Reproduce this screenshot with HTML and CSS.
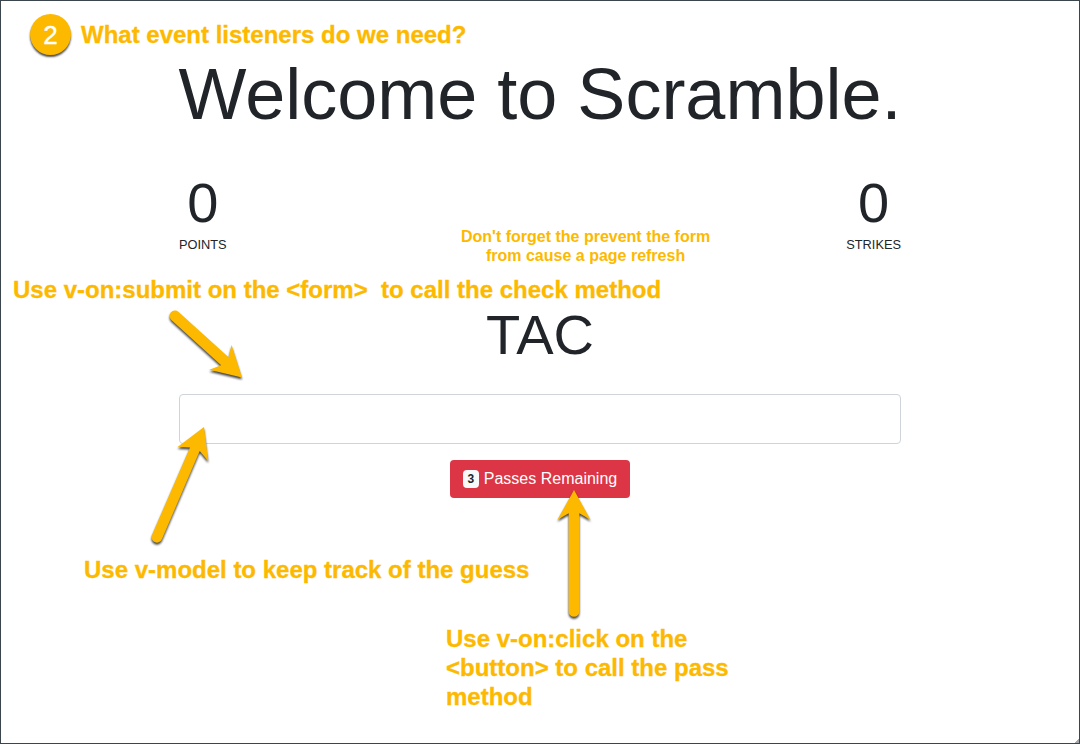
FILE: index.html
```html
<!DOCTYPE html>
<html lang="en">
<head>
<meta charset="utf-8">
<title>Scramble</title>
<link rel="stylesheet" href="styles.css">
</head>
<body>
<main class="game">
  <h1 class="title">Welcome to Scramble.</h1>
  <section class="scores">
    <div class="score"><span class="score-value">0</span><span class="score-label">POINTS</span></div>
    <div class="score"><span class="score-value">0</span><span class="score-label">STRIKES</span></div>
  </section>
  <div class="word">TAC</div>
  <form class="guess"><input class="guess-input" type="text" aria-label="Guess"></form>
  <button class="pass" type="button"><span class="badge">3</span><span>Passes Remaining</span></button>
</main>

<div class="step">2</div>
<p class="note note-question">What event listeners do we need?</p>
<p class="note note-prevent">Don't forget the prevent the form<br>from cause a page refresh</p>
<p class="note note-submit">Use v-on:submit on the &lt;form&gt;&nbsp; to call the check method</p>
<p class="note note-model">Use v-model to keep track of the guess</p>
<p class="note note-click">Use v-on:click on the<br>&lt;button&gt; to call the pass<br>method</p>
<svg class="arrows" width="1080" height="744" viewBox="0 0 1080 744" aria-hidden="true">
  <path d="M178.6 312 L228.6 357.2 L231.6 345 L242 377.5 L209.3 369.8 L221.2 365.3 L171.3 320 A5.3 5.3 0 0 1 178.6 312Z"/>
  <path d="M151.8 535.5 L190 447.6 L177.6 447 L204 427 L208.2 461 L199.7 451 L162 539 A5.3 5.3 0 0 1 151.8 535.5Z"/>
  <path d="M568.7 611.5 L568.7 513.2 L557.5 519.8 L574 490 L590.5 519.8 L579.3 513.2 L579.3 611.5 A5.3 5.3 0 0 1 568.7 611.5Z"/>
</svg>
<div class="resize-corner"></div>
</body>
</html>
```
FILE: styles.css
```css
* { box-sizing: border-box; }

body {
  margin: 0;
  height: 744px;
  overflow: hidden;
  position: relative;
  border: 1px solid #3b454d;
  background: #fff;
  color: #212529;
  font-family: "Liberation Sans", Arial, sans-serif;
}

.game {
  width: 722px;
  margin: 0 auto;
  padding-top: 50px;
  display: flex;
  flex-direction: column;
  align-items: center;
}

.title {
  margin: 0 0 32px;
  font-size: 72px;
  font-weight: 400;
  line-height: 86px;
  white-space: nowrap;
}

.scores {
  align-self: stretch;
  display: flex;
  justify-content: space-between;
}

.score { display: flex; flex-direction: column; align-items: center; }
.score-value { font-size: 56px; line-height: 67px; }
.score-label { margin-top: 1px; font-size: 12.8px; line-height: 15px; }

.word { margin-top: 49px; font-size: 56px; line-height: 67px; }

.guess { align-self: stretch; margin-top: 26px; }

.guess-input {
  display: block;
  width: 100%;
  height: 50px;
  padding: 8px 16px;
  border: 1px solid #ced4da;
  border-radius: 4px;
  background: #fff;
  font: inherit;
}

.pass {
  margin-top: 16px;
  width: 180px;
  height: 38px;
  padding: 0 12px;
  display: flex;
  align-items: center;
  justify-content: center;
  gap: 5px;
  border: 0;
  border-radius: 4px;
  background: #dc3545;
  color: #fff;
  font: 16px "Liberation Sans", Arial, sans-serif;
  white-space: nowrap;
}

.badge {
  width: 16px;
  height: 18px;
  border-radius: 4px;
  background: #f8f9fa;
  color: #212529;
  font-size: 12px;
  font-weight: 700;
  line-height: 18px;
  text-align: center;
}

.step {
  position: absolute;
  left: 29px;
  top: 13px;
  width: 41px;
  height: 41px;
  border-radius: 50%;
  background: #fdb900;
  box-shadow: 0 2px 2px rgba(0, 0, 0, .7);
  color: #fff;
  font-size: 26px;
  line-height: 43px;
  text-align: center;
  -webkit-text-stroke: .4px #fff;
}

.note {
  position: absolute;
  margin: 0;
  color: #fdb900;
  font-size: 24px;
  font-weight: 700;
  line-height: 29px;
  white-space: nowrap;
  -webkit-text-stroke: .3px #fdb900;
}

.note-question { left: 80px; top: 19px; }
.note-prevent { left: 460px; top: 226px; font-size: 16px; line-height: 19px; text-align: center; -webkit-text-stroke-width: 0; }
.note-submit { left: 12px; top: 274px; }
.note-model { left: 83px; top: 554px; }
.note-click { left: 445px; top: 623px; }

.arrows {
  position: absolute;
  left: -1px;
  top: -1px;
  fill: #fdb900;
  filter: drop-shadow(0 2px 1px rgba(0, 0, 0, .75));
}

.resize-corner {
  position: absolute;
  right: 0;
  bottom: 0;
  width: 5px;
  height: 5px;
  background: linear-gradient(135deg, transparent 50%, #a5a9ac 50%);
}
```
